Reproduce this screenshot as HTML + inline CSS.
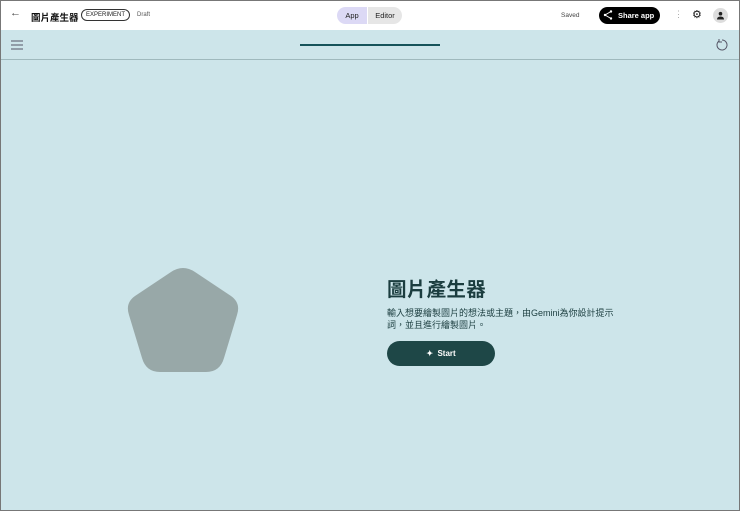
<!DOCTYPE html>
<html><head><meta charset="utf-8"><style>
*{margin:0;padding:0;box-sizing:border-box}
html,body{width:740px;height:511px;overflow:hidden}
body{font-family:"Liberation Sans","Noto Sans CJK TC",sans-serif;background:#cde5ea;position:relative}
.frame{position:absolute;left:0;top:0;width:740px;height:511px;border:1px solid #777;pointer-events:none}
.hdr{position:absolute;left:0;top:0;width:740px;height:30px;background:#fff}
.abs{position:absolute}
</style></head><body>
<div class="hdr">
 <div class="abs" style="left:10px;top:7px;font-size:11px;color:#444">←</div>
 <div class="abs" style="left:31px;top:10px;font-size:9.5px;font-weight:bold;color:#111;white-space:nowrap">圖片產生器</div>
 <div class="abs" style="left:81px;top:9px;width:49px;height:12px;border:1px solid #333;border-radius:7px;font-size:6px;line-height:10px;text-align:center;color:#222">EXPERIMENT</div>
 <div class="abs" style="left:137px;top:12px;font-size:6px;color:#555">Draft</div>
 <div class="abs" style="left:337px;top:7px;width:30px;height:17px;background:#dcd9f5;border-radius:9px 0 0 9px;font-size:7.5px;line-height:17px;text-align:center;color:#222">App</div>
 <div class="abs" style="left:368px;top:7px;width:34px;height:17px;background:#e6e6e6;border-radius:0 9px 9px 0;font-size:7.5px;line-height:17px;text-align:center;color:#222">Editor</div>
 <div class="abs" style="left:561px;top:12px;font-size:6.5px;color:#444">Saved</div>
 <div class="abs" style="left:599px;top:7px;width:61px;height:17px;background:#000;border-radius:9px;color:#fff;font-size:7.5px;line-height:17px;padding-left:19px;font-weight:bold">Share app</div>
 <svg class="abs" style="left:603px;top:10px" width="10" height="10" viewBox="0 0 10 10"><path d="M8 1.5L2 5L8 8.5" stroke="#fff" fill="none" stroke-width="1"/><circle cx="8" cy="1.5" r="1.2" fill="#fff"/><circle cx="2" cy="5" r="1.2" fill="#fff"/><circle cx="8" cy="8.5" r="1.2" fill="#fff"/></svg>
 <div class="abs" style="left:674px;top:9px;font-size:9px;color:#aaa">⋮</div>
 <div class="abs" style="left:692px;top:8px;font-size:11px;color:#111">⚙</div>
 <div class="abs" style="left:713px;top:8px;width:15px;height:15px;border-radius:50%;background:#ddd"></div>
 <svg class="abs" style="left:716px;top:11px" width="9" height="9" viewBox="0 0 9 9"><circle cx="4.5" cy="2.7" r="1.8" fill="#222"/><path d="M1 8.5Q1 5.5 4.5 5.5Q8 5.5 8 8.5Z" fill="#222"/></svg>
</div>
<svg class="abs" style="left:11px;top:40px" width="13" height="10"><path d="M0 1H12M0 5H12M0 9H12" stroke="#556" stroke-width="1"/></svg>
<div class="abs" style="left:300px;top:44px;width:140px;height:2px;background:#16535a"></div>
<svg class="abs" style="left:715px;top:38px" width="14" height="14" viewBox="0 0 14 14"><path d="M4 3A5 5 0 1 0 7 2" stroke="#556" fill="none" stroke-width="1"/><path d="M4 1V4H7" stroke="#556" fill="none" stroke-width="1"/></svg>
<div class="abs" style="left:0;top:59px;width:740px;height:1px;background:#9fb9bd"></div>
<svg class="abs" style="left:124px;top:266px" width="118" height="110" viewBox="0 0 118 110"><path d="M47 6Q59 -2 71 6L107 30Q117 37 113 49L100 92Q96 106 82 106H36Q22 106 18 92L5 49Q1 37 11 30Z" fill="#98a8a8"/></svg>
<div class="abs" style="left:387px;top:273px;font-size:19.5px;font-weight:bold;color:#1b3d3f;letter-spacing:0.3px">圖片產生器</div>
<div class="abs" style="left:387px;top:307px;width:232px;font-size:9px;line-height:12px;color:#1b3d3f">輸入想要繪製圖片的想法或主題，由Gemini為你設計提示詞，並且進行繪製圖片。</div>
<div class="abs" style="left:387px;top:341px;width:108px;height:25px;background:#1e4747;border-radius:13px;color:#fff;font-size:8px;line-height:25px;text-align:center;font-weight:bold">✦&nbsp; Start</div>
<div class="frame"></div>
</body></html>
